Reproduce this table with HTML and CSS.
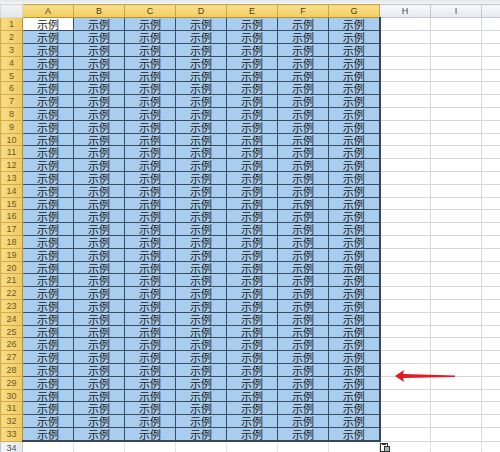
FILE: index.html
```html
<!DOCTYPE html>
<html>
<head>
<meta charset="utf-8">
<link rel="stylesheet" href="styles.css">
</head>
<body>
<div class="sheet">
  <div class="topstrip"></div>
  <table class="grid">
    <colgroup>
      <col class="c-rh"><col class="c-w"><col class="c-w"><col class="c-w"><col class="c-w"><col class="c-w"><col class="c-w"><col class="c-w"><col class="c-w"><col class="c-w"><col class="c-last">
    </colgroup>
    <thead>
      <tr><th class="corner"></th><th class="ch sel">A</th><th class="ch sel">B</th><th class="ch sel">C</th><th class="ch sel">D</th><th class="ch sel">E</th><th class="ch sel">F</th><th class="ch sel">G</th><th class="ch">H</th><th class="ch">I</th><th class="ch"></th></tr>
    </thead>
    <tbody>
      <tr><th class="rh">1</th><td class="s act">示例</td><td class="s">示例</td><td class="s">示例</td><td class="s">示例</td><td class="s">示例</td><td class="s">示例</td><td class="s">示例</td><td></td><td></td><td></td></tr>
      <tr><th class="rh">2</th><td class="s">示例</td><td class="s">示例</td><td class="s">示例</td><td class="s">示例</td><td class="s">示例</td><td class="s">示例</td><td class="s">示例</td><td></td><td></td><td></td></tr>
      <tr><th class="rh">3</th><td class="s">示例</td><td class="s">示例</td><td class="s">示例</td><td class="s">示例</td><td class="s">示例</td><td class="s">示例</td><td class="s">示例</td><td></td><td></td><td></td></tr>
      <tr><th class="rh">4</th><td class="s">示例</td><td class="s">示例</td><td class="s">示例</td><td class="s">示例</td><td class="s">示例</td><td class="s">示例</td><td class="s">示例</td><td></td><td></td><td></td></tr>
      <tr><th class="rh">5</th><td class="s">示例</td><td class="s">示例</td><td class="s">示例</td><td class="s">示例</td><td class="s">示例</td><td class="s">示例</td><td class="s">示例</td><td></td><td></td><td></td></tr>
      <tr><th class="rh">6</th><td class="s">示例</td><td class="s">示例</td><td class="s">示例</td><td class="s">示例</td><td class="s">示例</td><td class="s">示例</td><td class="s">示例</td><td></td><td></td><td></td></tr>
      <tr><th class="rh">7</th><td class="s">示例</td><td class="s">示例</td><td class="s">示例</td><td class="s">示例</td><td class="s">示例</td><td class="s">示例</td><td class="s">示例</td><td></td><td></td><td></td></tr>
      <tr><th class="rh">8</th><td class="s">示例</td><td class="s">示例</td><td class="s">示例</td><td class="s">示例</td><td class="s">示例</td><td class="s">示例</td><td class="s">示例</td><td></td><td></td><td></td></tr>
      <tr><th class="rh">9</th><td class="s">示例</td><td class="s">示例</td><td class="s">示例</td><td class="s">示例</td><td class="s">示例</td><td class="s">示例</td><td class="s">示例</td><td></td><td></td><td></td></tr>
      <tr><th class="rh">10</th><td class="s">示例</td><td class="s">示例</td><td class="s">示例</td><td class="s">示例</td><td class="s">示例</td><td class="s">示例</td><td class="s">示例</td><td></td><td></td><td></td></tr>
      <tr><th class="rh">11</th><td class="s">示例</td><td class="s">示例</td><td class="s">示例</td><td class="s">示例</td><td class="s">示例</td><td class="s">示例</td><td class="s">示例</td><td></td><td></td><td></td></tr>
      <tr><th class="rh">12</th><td class="s">示例</td><td class="s">示例</td><td class="s">示例</td><td class="s">示例</td><td class="s">示例</td><td class="s">示例</td><td class="s">示例</td><td></td><td></td><td></td></tr>
      <tr><th class="rh">13</th><td class="s">示例</td><td class="s">示例</td><td class="s">示例</td><td class="s">示例</td><td class="s">示例</td><td class="s">示例</td><td class="s">示例</td><td></td><td></td><td></td></tr>
      <tr><th class="rh">14</th><td class="s">示例</td><td class="s">示例</td><td class="s">示例</td><td class="s">示例</td><td class="s">示例</td><td class="s">示例</td><td class="s">示例</td><td></td><td></td><td></td></tr>
      <tr><th class="rh">15</th><td class="s">示例</td><td class="s">示例</td><td class="s">示例</td><td class="s">示例</td><td class="s">示例</td><td class="s">示例</td><td class="s">示例</td><td></td><td></td><td></td></tr>
      <tr><th class="rh">16</th><td class="s">示例</td><td class="s">示例</td><td class="s">示例</td><td class="s">示例</td><td class="s">示例</td><td class="s">示例</td><td class="s">示例</td><td></td><td></td><td></td></tr>
      <tr><th class="rh">17</th><td class="s">示例</td><td class="s">示例</td><td class="s">示例</td><td class="s">示例</td><td class="s">示例</td><td class="s">示例</td><td class="s">示例</td><td></td><td></td><td></td></tr>
      <tr><th class="rh">18</th><td class="s">示例</td><td class="s">示例</td><td class="s">示例</td><td class="s">示例</td><td class="s">示例</td><td class="s">示例</td><td class="s">示例</td><td></td><td></td><td></td></tr>
      <tr><th class="rh">19</th><td class="s">示例</td><td class="s">示例</td><td class="s">示例</td><td class="s">示例</td><td class="s">示例</td><td class="s">示例</td><td class="s">示例</td><td></td><td></td><td></td></tr>
      <tr><th class="rh">20</th><td class="s">示例</td><td class="s">示例</td><td class="s">示例</td><td class="s">示例</td><td class="s">示例</td><td class="s">示例</td><td class="s">示例</td><td></td><td></td><td></td></tr>
      <tr><th class="rh">21</th><td class="s">示例</td><td class="s">示例</td><td class="s">示例</td><td class="s">示例</td><td class="s">示例</td><td class="s">示例</td><td class="s">示例</td><td></td><td></td><td></td></tr>
      <tr><th class="rh">22</th><td class="s">示例</td><td class="s">示例</td><td class="s">示例</td><td class="s">示例</td><td class="s">示例</td><td class="s">示例</td><td class="s">示例</td><td></td><td></td><td></td></tr>
      <tr><th class="rh">23</th><td class="s">示例</td><td class="s">示例</td><td class="s">示例</td><td class="s">示例</td><td class="s">示例</td><td class="s">示例</td><td class="s">示例</td><td></td><td></td><td></td></tr>
      <tr><th class="rh">24</th><td class="s">示例</td><td class="s">示例</td><td class="s">示例</td><td class="s">示例</td><td class="s">示例</td><td class="s">示例</td><td class="s">示例</td><td></td><td></td><td></td></tr>
      <tr><th class="rh">25</th><td class="s">示例</td><td class="s">示例</td><td class="s">示例</td><td class="s">示例</td><td class="s">示例</td><td class="s">示例</td><td class="s">示例</td><td></td><td></td><td></td></tr>
      <tr><th class="rh">26</th><td class="s">示例</td><td class="s">示例</td><td class="s">示例</td><td class="s">示例</td><td class="s">示例</td><td class="s">示例</td><td class="s">示例</td><td></td><td></td><td></td></tr>
      <tr><th class="rh">27</th><td class="s">示例</td><td class="s">示例</td><td class="s">示例</td><td class="s">示例</td><td class="s">示例</td><td class="s">示例</td><td class="s">示例</td><td></td><td></td><td></td></tr>
      <tr><th class="rh">28</th><td class="s">示例</td><td class="s">示例</td><td class="s">示例</td><td class="s">示例</td><td class="s">示例</td><td class="s">示例</td><td class="s">示例</td><td></td><td></td><td></td></tr>
      <tr><th class="rh">29</th><td class="s">示例</td><td class="s">示例</td><td class="s">示例</td><td class="s">示例</td><td class="s">示例</td><td class="s">示例</td><td class="s">示例</td><td></td><td></td><td></td></tr>
      <tr><th class="rh">30</th><td class="s">示例</td><td class="s">示例</td><td class="s">示例</td><td class="s">示例</td><td class="s">示例</td><td class="s">示例</td><td class="s">示例</td><td></td><td></td><td></td></tr>
      <tr><th class="rh">31</th><td class="s">示例</td><td class="s">示例</td><td class="s">示例</td><td class="s">示例</td><td class="s">示例</td><td class="s">示例</td><td class="s">示例</td><td></td><td></td><td></td></tr>
      <tr><th class="rh">32</th><td class="s">示例</td><td class="s">示例</td><td class="s">示例</td><td class="s">示例</td><td class="s">示例</td><td class="s">示例</td><td class="s">示例</td><td></td><td></td><td></td></tr>
      <tr class="lastsel"><th class="rh">33</th><td class="s">示例</td><td class="s">示例</td><td class="s">示例</td><td class="s">示例</td><td class="s">示例</td><td class="s">示例</td><td class="s endc">示例</td><td></td><td></td><td></td></tr>
      <tr class="r34"><th class="rh plain">34</th><td></td><td></td><td></td><td></td><td></td><td></td><td class="handlecell"><span class="paste"><svg width="11" height="10" viewBox="0 0 11 10"><rect x="0.5" y="0.5" width="7" height="8" fill="#fff" stroke="#333"/><rect x="2" y="0" width="4" height="2" fill="#333"/><rect x="4" y="3" width="6" height="6" fill="#333"/><rect x="5" y="4" width="4" height="4" fill="#9bb"/></svg></span></td><td></td><td></td><td></td></tr>
    </tbody>
  </table>
  <svg class="arrow" width="70" height="16" viewBox="0 0 70 16">
    <polygon points="2,8 11,2 10,6 62,7.5 62,9 10,10 11,14" fill="#e01b24"/>
  </svg>
</div>
</body>
</html>
```
FILE: styles.css
```css
html, body {
  margin: 0;
  padding: 0;
  background: #ffffff;
  overflow: hidden;
}
.sheet {
  position: relative;
  width: 500px;
  height: 452px;
  overflow: hidden;
  font-family: "Noto Sans CJK SC", "Liberation Sans", sans-serif;
}
.topstrip {
  height: 4px;
  background: linear-gradient(#e4e6e8, #f4f5f6);
}
.grid {
  border-collapse: collapse;
  table-layout: fixed;
  width: 500px;
}
.c-rh { width: 22px; }
.c-w { width: 51px; }
.c-last { width: 19px; }
.grid th, .grid td {
  padding: 0;
  border: 1px solid #d6d8db;
  height: 12px;
  line-height: 10px;
  text-align: center;
  vertical-align: middle;
  white-space: nowrap;
}
.grid tbody tr { height: 13px; }
.grid tbody tr:nth-child(5n) { height: 12px; }
.grid tbody tr:nth-child(5n) td, .grid tbody tr:nth-child(5n) th { height: 11px; }
.corner {
  background: linear-gradient(#f2f3f5, #e3e6ea);
  border-color: #c5c9cf;
}
.ch {
  height: 12px;
  font: 9px/11px "Liberation Sans", sans-serif;
  color: #3d4a5c;
  background: linear-gradient(#f8fafc, #e4e8ed);
  border-color: #c5cad1 !important;
}
.ch.sel {
  background: linear-gradient(#f9e08e, #f2cc5e);
  border-color: #c9a74f !important;
  border-bottom: 1px solid #b8932f !important;
  color: #4a3f1a;
}
.rh {
  font: 9px/10px "Liberation Sans", sans-serif;
  color: #6b5a24;
  background: linear-gradient(90deg, #f8dc86, #f1ca5e);
  border-color: #cfad55 !important;
  border-right: 1px solid #b8932f !important;
}
.rh.plain {
  background: linear-gradient(90deg, #f5f6f8, #e5e8ec);
  color: #4a5566;
  border-color: #c5cad1 !important;
}
.grid td.s {
  background: #a9cdef;
  border: 1px solid #3a4c62;
  font-size: 11px;
  color: #1a1a1a;
}
.grid td.s.act {
  background: #ffffff;
}
.grid td.s.endc, .grid tbody tr td.s:nth-child(8) {
  border-right: 2px solid #3a4553;
}
.lastsel td.s {
  border-bottom: 2px solid #3a4553;
}
.r34 td { border-color: #dfe1e4; }
.handlecell {
  position: relative;
}
.paste {
  position: absolute;
  right: -12px;
  top: 1px;
  line-height: 0;
}
.arrow {
  position: absolute;
  left: 393px;
  top: 368px;
}
```
